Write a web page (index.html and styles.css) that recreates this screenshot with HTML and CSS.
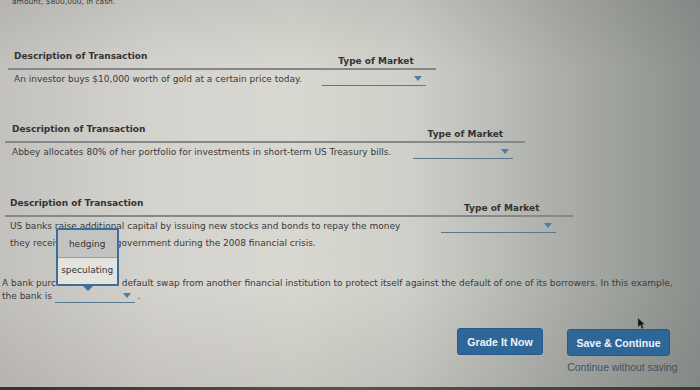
FILE: index.html
```html
<!DOCTYPE html>
<html>
<head>
<meta charset="utf-8">
<link rel="stylesheet" href="styles.css">
</head>
<body>
<div class="screen">
  <p class="top-text">amount, $800,000, in cash.</p>

  <div class="qtable q1">
    <div class="h-desc">Description of Transaction</div>
    <div class="h-market">Type of Market</div>
    <div class="d-desc">An investor buys $10,000 worth of gold at a certain price today.</div>
    <div class="d-market"><span class="dropdown w1"><span class="arrow"></span></span></div>
  </div>

  <div class="qtable q2">
    <div class="h-desc">Description of Transaction</div>
    <div class="h-market">Type of Market</div>
    <div class="d-desc">Abbey allocates 80% of her portfolio for investments in short-term US Treasury bills.</div>
    <div class="d-market"><span class="dropdown w2"><span class="arrow"></span></span></div>
  </div>

  <div class="qtable q3">
    <div class="h-desc">Description of Transaction</div>
    <div class="h-market">Type of Market</div>
    <div class="d-desc tall">US banks raise additional capital by issuing new stocks and bonds to repay the money<br>they received from the government during the 2008 financial crisis.</div>
    <div class="d-market"><span class="dropdown w3"><span class="arrow"></span></span></div>
  </div>

  <p class="para">A bank purchases a credit default swap from another financial institution to protect itself against the default of one of its borrowers. In this example,<br>the bank is <span class="dropdown inline"><span class="arrow"></span><span class="menu"><span class="opt sel">hedging</span><span class="opt">speculating</span><span class="pointer"></span></span></span> .</p>

  <div class="actions">
    <button class="btn">Grade It Now</button>
    <div class="save-col">
      <button class="btn wide">Save &amp; Continue</button>
      <span class="link">Continue without saving</span>
    </div>
  </div>

  <svg class="cursor" width="9" height="13" viewBox="0 0 9 13"><path d="M1 1 L1 10 L3.3 8 L5 11.8 L6.5 11.1 L4.9 7.6 L7.8 7.4 Z" fill="#111" stroke="#777" stroke-width="0.5"/></svg>
  <div class="bottom-edge"></div>
</div>
</body>
</html>
```

FILE: styles.css
```css
html, body {
  margin: 0;
  padding: 0;
}
body {
  width: 700px;
  height: 390px;
  overflow: hidden;
  font-family: "DejaVu Sans", Verdana, sans-serif;
  font-size: 9px;
  color: #3a3a3a;
}
.screen {
  position: relative;
  width: 700px;
  height: 390px;
  overflow: hidden;
  background:
    linear-gradient(to bottom, rgba(60,60,60,0.10) 0%, rgba(0,0,0,0) 18%, rgba(0,0,0,0) 72%, rgba(60,55,55,0.10) 100%),
    linear-gradient(to right, #c3c1bd 0%, #d5d3ce 22%, #d8d7d0 42%, #cfd0c9 58%, #b9bbb5 72%, #a3a6a1 85%, #8c908c 100%);
}
.top-text {
  margin: -3px 0 0 12px;
  font-size: 7.5px;
  line-height: 9px;
  height: 9px;
  color: #3c3c3c;
}
.qtable {
  display: grid;
  width: max-content;
  grid-template-columns: auto 120px;
  align-items: end;
}
.q1 { margin: 45px 0 0 8px; }
.q2 { margin: 38px 0 0 5px; }
.q3 { margin: 39px 0 0 5px; grid-template-columns: auto 143px; }
.h-desc, .h-market {
  font-weight: bold;
  line-height: 11px;
  border-bottom: 2px solid #86878a;
  color: #333;
}
.h-desc {
  padding: 0 0 6px 6px;
}
.q2 .h-desc { padding-left: 7px; }
.q3 .h-desc { padding-left: 5px; }
.h-market {
  padding-bottom: 1px;
  text-align: center;
}
.d-desc {
  align-self: start;
  padding: 3px 14px 0 6px;
  line-height: 12px;
}
.q2 .d-desc { padding-left: 7px; }
.q3 .d-desc { padding-left: 5px; padding-right: 30px; }
.d-desc.tall {
  padding-top: 1px;
  line-height: 17px;
}
.d-market {
  align-self: start;
  padding-top: 2px;
  display: flex;
  justify-content: center;
}
.dropdown {
  position: relative;
  display: flex;
  justify-content: flex-end;
  align-items: center;
  height: 14px;
  border-bottom: 1.5px solid #587890;
  box-sizing: border-box;
}
.w1 { width: 104px; margin-left: -3px; }
.w2 { width: 100px; margin-left: -4px; }
.w3 { width: 115px; margin-left: -7px; }
.arrow {
  width: 0;
  height: 0;
  border-left: 4.5px solid transparent;
  border-right: 4.5px solid transparent;
  border-top: 5px solid #4f7ca3;
  margin-right: 4px;
  margin-top: -1px;
}
.para {
  margin: 25px 0 0 2px;
  line-height: 13px;
}
.dropdown.inline {
  display: inline-flex;
  vertical-align: 1px;
  width: 80px;
  height: 12px;
}
.menu {
  position: absolute;
  left: 1px;
  bottom: 16px;
  width: 63px;
  height: 58px;
  box-sizing: border-box;
  border: 2px solid #3c6e99;
  border-radius: 2px;
  background: #e4e4df;
  display: flex;
  flex-direction: column;
}
.opt {
  flex: 1;
  display: flex;
  align-items: center;
  justify-content: center;
  line-height: 11px;
  color: #333;
}
.opt.sel {
  background: #c3c4c1;
  border-bottom: 1px solid #9a9c9c;
  padding-top: 2px;
}
.pointer {
  position: absolute;
  left: 25px;
  bottom: -7px;
  width: 0;
  height: 0;
  border-left: 5px solid transparent;
  border-right: 5px solid transparent;
  border-top: 5px solid #3c6e99;
}
.actions {
  margin-top: 25px;
  display: flex;
  justify-content: flex-end;
  align-items: flex-start;
  gap: 24px;
  padding-right: 30px;
}
.save-col {
  display: flex;
  flex-direction: column;
  align-items: center;
  gap: 6px;
}
.btn {
  font-family: "Liberation Sans", Arial, sans-serif;
  font-weight: bold;
  font-size: 10.6px;
  color: #eef3f8;
  background: #2f6698;
  border: 1px solid #285a88;
  border-radius: 3px;
  width: 86px;
  height: 27px;
  padding: 0;
}
.btn.wide {
  width: 103px;
  margin-top: 1px;
}
.link {
  font-family: "Liberation Sans", Arial, sans-serif;
  font-size: 10.4px;
  color: #3d5166;
  margin-right: -8px;
}
.cursor {
  position: absolute;
  left: 637px;
  top: 317px;
}
.bottom-edge {
  position: absolute;
  left: 0;
  right: 0;
  bottom: 0;
  height: 3px;
  background: linear-gradient(to right, #333 0%, #555 50%, #3a3a3a 100%);
}
```
